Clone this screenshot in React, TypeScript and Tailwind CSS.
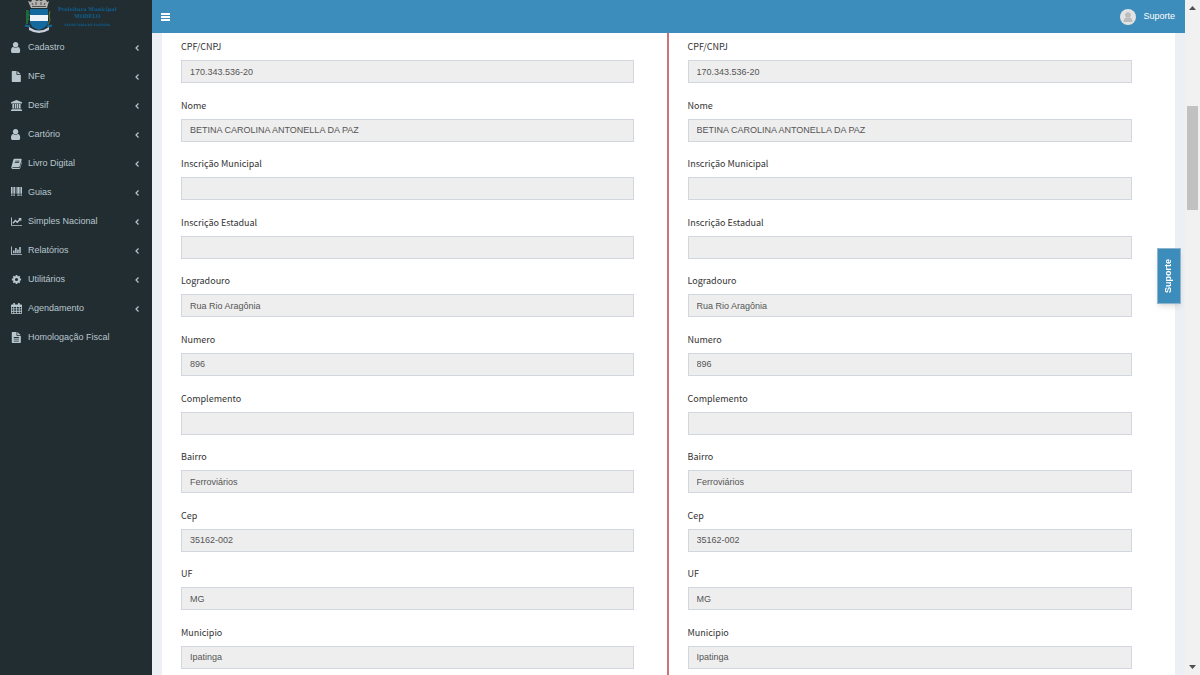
import type { ReactNode } from "react";

type MenuItem = {
    label: string;
    icon: ReactNode;
    hasChildren?: boolean;
};

const iconClass = "h-[11px] w-[11px] shrink-0 fill-current";

function UserIcon() {
    return (
        <svg viewBox="0 128 1536 1536" className={iconClass}>
            <path d="M1280 1399q0 109-62.5 187t-150.5 78h-854q-88 0-150.5-78t-62.5-187q0-85 8.5-160.5t31.5-152 58.5-131 94-89 134.5-34.5q131 128 313 128t313-128q76 0 134.5 34.5t94 89 58.5 131 31.5 152 8.5 160.5zm-256-887q0 159-112.5 271.5t-271.5 112.5-271.5-112.5-112.5-271.5 112.5-271.5 271.5-112.5 271.5 112.5 112.5 271.5z" />
        </svg>
    );
}

function FileIcon() {
    return (
        <svg viewBox="0 0 14 14" className={iconClass}>
            <path d="M1.8 0H7v4.2c0 .5.3.8.8.8h4.7v8.2c0 .5-.3.8-.8.8H1.8c-.5 0-.8-.3-.8-.8V.8c0-.5.3-.8.8-.8zM8 0l4.500 4H8z" />
        </svg>
    );
}

function BankIcon() {
    return (
        <svg viewBox="0 0 14 14" className={iconClass}>
            <path d="M7 0l7 3v1.300H0V3zM1.800 5h2.200v5.500H1.800zM5 5h1.700v5.500H5zM7.500 5h1.700v5.500H7.500zM10 5h2.200v5.500H10zM1 11h12v1H1zM0 12.300h14V14H0z" />
        </svg>
    );
}

function BookIcon() {
    return (
        <svg viewBox="0 0 14 14" className={iconClass}>
            <path
                fillRule="evenodd"
                d="M4.500 1h7.700c1 0 1.600.7 1.300 1.600l-2.400 8c-.3.800-.8 1.200-1.600 1.200H2.400c-.7 0-.8.800 0 1h7.700c.8 0 1.200-.4 1.400-1l2.300-7.300c.3.500.2 1 .1 1.400l-2 6.600c-.3 1-1 1.500-2 1.500H2.500C1 14 0 12.700.5 11.400L3 2.300C3.200 1.500 3.800 1 4.500 1zM5.500 3.500l-.3.900h5.500l.3-.9zM4.900 5.500l-.3.900h5.500l.3-.9z"
            />
        </svg>
    );
}

function BarcodeIcon() {
    return (
        <svg viewBox="0 2 14 14" className={iconClass}>
            <path d="M0 0h2v10.500H0zM3 0h2v10.500H3zM6 0h1v10.500H6zM8 0h3v10.500H8zM12 0h2v10.500h-2zM0 11.500h2V13H0zM3 11.500h2V13H3zM8 11.500h3V13H8zM12 11.500h2V13h-2z" />
        </svg>
    );
}

function LineChartIcon() {
    return (
        <svg viewBox="0 0 16 14" className={iconClass}>
            <path d="M0 1h1.300v11H16v1.300H0z" />
            <path d="M10.500 2H15v4.500l-1.500-1.500L9 9.500 6.500 7 3.500 10.200 2 8.700l4.500-4.500L9 6.700l3-3.200z" />
        </svg>
    );
}

function BarChartIcon() {
    return (
        <svg viewBox="0 0 16 14" className={iconClass}>
            <path d="M0 1h1.300v11H16v1.300H0zM3 7h2.200v4H3zM6 3.500h2.200V11H6zM9 5.500h2.200V11H9zM12 2h2.200v9H12z" />
        </svg>
    );
}

function CogIcon() {
    return (
        <svg viewBox="-1 -1 16 16" className={iconClass}>
            <circle cx="7" cy="7" r="3.700" fill="none" stroke="currentColor" strokeWidth="2.800" />
            <path
                fill="none"
                stroke="currentColor"
                strokeWidth="2.600"
                d="M7 .3v2.500M7 11.200v2.500M.3 7h2.500M11.200 7h2.500M2.300 2.300L4 4M10 10l1.700 1.700M2.300 11.700L4 10M10 4l1.700-1.700"
            />
        </svg>
    );
}

function CalendarIcon() {
    return (
        <svg viewBox="0 0 14 14" className={iconClass}>
            <path
                fillRule="evenodd"
                d="M1 2h2V0h2v2h4V0h2v2h2c.5 0 1 .4 1 1v10c0 .6-.5 1-1 1H1c-.5 0-1-.4-1-1V3c0-.6.5-1 1-1zM1 5v2h2V5zM4 5v2h2.500V5zM7.500 5v2H10V5zM11 5v2h2V5zM1 8v2h2V8zM4 8v2h2.500V8zM7.500 8v2H10V8zM11 8v2h2V8zM1 11v2h2v-2zM4 11v2h2.500v-2zM7.500 11v2H10v-2zM11 11v2h2v-2z"
            />
        </svg>
    );
}

function FileTextIcon() {
    return (
        <svg viewBox="0 0 14 14" className={iconClass}>
            <path
                fillRule="evenodd"
                d="M1.800 0H7v4.200c0 .5.3.8.8.8h4.700v8.200c0 .5-.3.8-.8.8H1.800c-.5 0-.8-.3-.8-.8V.8c0-.5.3-.8.8-.8zM8 0l4.500 4H8zM3.500 6.500v1H10v-1zM3.500 8.700v1H10v-1zM3.500 11v1H10v-1z"
            />
        </svg>
    );
}

const menu: MenuItem[] = [
    { label: "Cadastro", icon: <UserIcon />, hasChildren: true },
    { label: "NFe", icon: <FileIcon />, hasChildren: true },
    { label: "Desif", icon: <BankIcon />, hasChildren: true },
    { label: "Cartório", icon: <UserIcon />, hasChildren: true },
    { label: "Livro Digital", icon: <BookIcon />, hasChildren: true },
    { label: "Guias", icon: <BarcodeIcon />, hasChildren: true },
    { label: "Simples Nacional", icon: <LineChartIcon />, hasChildren: true },
    { label: "Relatórios", icon: <BarChartIcon />, hasChildren: true },
    { label: "Utilitários", icon: <CogIcon />, hasChildren: true },
    { label: "Agendamento", icon: <CalendarIcon />, hasChildren: true },
    { label: "Homologação Fiscal", icon: <FileTextIcon /> },
];

const fields = [
    { name: "cpf", label: "CPF/CNPJ", value: "170.343.536-20" },
    { name: "nome", label: "Nome", value: "BETINA CAROLINA ANTONELLA DA PAZ" },
    { name: "inscricao-municipal", label: "Inscrição Municipal", value: "" },
    { name: "inscricao-estadual", label: "Inscrição Estadual", value: "" },
    { name: "logradouro", label: "Logradouro", value: "Rua Rio Aragônia" },
    { name: "numero", label: "Numero", value: "896" },
    { name: "complemento", label: "Complemento", value: "" },
    { name: "bairro", label: "Bairro", value: "Ferroviários" },
    { name: "cep", label: "Cep", value: "35162-002" },
    { name: "uf", label: "UF", value: "MG" },
    { name: "municipio", label: "Municipio", value: "Ipatinga" },
];

function CityLogo() {
    return (
        <a href="#" className="flex h-[33px] items-start gap-1 pl-6">
            <svg viewBox="0 0 30 34" className="h-[34px] w-[30px] shrink-0">
                {/* Crown */}
                <path d="M4 1l3 1 1-2h3l2 1 2-1 2 1 2-1h3l1 2 2-1-2 7H7z" fill="#b5b1ae" />
                <path d="M8 3l1 2M12 2v3M17 2v3M21 3l-1 2M8 6.500h14" stroke="#4f5050" strokeWidth="1" />
                {/* Side branches */}
                <path d="M3 10v14M5 11l-2 2 2 2-2 2 2 3" stroke="#1f6b3c" strokeWidth="2" fill="none" />
                <path d="M26 11l-1 5 1 4-2 5" stroke="#5d7a35" strokeWidth="1" fill="none" />
                {/* Shield */}
                <path d="M6 9h18v13q0 5-9 8-9-3-9-8z" fill="#146a9e" />
                <path d="M6 15h18v6H6z" fill="#eef3f8" />
                {/* Ribbon */}
                <path d="M1 25.500l5 1M28 25.500l-5 1" stroke="#146a9e" strokeWidth="2" />
                <path d="M5 27q10 7 20 0v3q-10 6-20 0z" fill="#c9cfdc" />
            </svg>
            <span className="flex flex-col items-center pt-[6px] font-['DejaVu_Serif',serif] font-bold text-[#0e5f8d]">
                <span className="text-[5px] leading-[7px] whitespace-nowrap">Prefeitura Municipal</span>
                <span className="text-[5px] leading-[7px]">MODELO</span>
                <span className="mt-1 text-[3px] leading-[3px] whitespace-nowrap">SECRETARIA DE FAZENDA</span>
            </span>
        </a>
    );
}

function Sidebar() {
    return (
        <aside className="w-[152px] shrink-0 bg-[#222d32] text-[#b8c7ce]">
            <CityLogo />
            <nav>
                <ul>
                    {menu.map((item) => (
                        <li key={item.label}>
                            <a href="#" className="flex h-[29px] items-center gap-[6px] pr-3 pl-[11px] text-[9px]">
                                {item.icon}
                                <span className="flex-1 whitespace-nowrap">{item.label}</span>
                                {item.hasChildren && (
                                    <svg viewBox="0 0 6 8" className="h-2 w-[6px]">
                                        <path d="M4.500 1.500L2 4l2.500 2.500" fill="none" stroke="currentColor" strokeWidth="1.200" />
                                    </svg>
                                )}
                            </a>
                        </li>
                    ))}
                </ul>
            </nav>
        </aside>
    );
}

function Header() {
    return (
        <header className="flex h-[33px] shrink-0 items-center justify-between bg-[#3c8dbc] pr-[10px] pl-[9px] text-white">
            <button type="button" aria-label="Menu">
                <svg viewBox="0 0 9 8" className="h-2 w-[9px] fill-current">
                    <path d="M0 0h9v2H0zM0 3h9v2H0zM0 6h9v2H0z" />
                </svg>
            </button>
            <a href="#" className="flex items-center gap-[7px] text-[9px]">
                <svg viewBox="0 0 16 16" className="h-4 w-4">
                    <circle cx="8" cy="8" r="8" fill="#e3e3e3" />
                    <circle cx="8" cy="6" r="2.800" fill="#bcbcbc" />
                    <path d="M3.500 13q0-4 3-4.500h3q3 .5 3 4.500z" fill="#bcbcbc" />
                </svg>
                Suporte
            </a>
        </header>
    );
}

function FieldColumn({ prefix, className }: { prefix: string; className: string }) {
    return (
        <div className={`flex flex-col justify-between gap-3 pt-[7px] pb-[6px] ${className}`}>
            {fields.map((field) => (
                <div key={field.name}>
                    <label
                        htmlFor={`${prefix}-${field.name}`}
                        className="mb-[6px] block font-['Noto_Sans_CJK_JP',sans-serif] text-[9px] leading-[14px] text-[#333]"
                    >
                        {field.label}
                    </label>
                    <input
                        id={`${prefix}-${field.name}`}
                        type="text"
                        readOnly
                        defaultValue={field.value}
                        className="block h-[23px] w-full border border-[#d2d6de] bg-[#eee] px-2 text-[9px] text-[#555]"
                    />
                </div>
            ))}
        </div>
    );
}

function Scrollbar() {
    return (
        <div className="flex w-[15px] shrink-0 flex-col items-center bg-[#f1f1f1] py-[6px]">
            <svg viewBox="0 0 7 4" className="h-1 w-[7px] fill-[#505050]">
                <path d="M0 4l3.500-4L7 4z" />
            </svg>
            <div className="flex w-full flex-1 flex-col items-center">
                <div className="basis-[14.6%]" />
                <div className="w-[11px] basis-[16%] bg-[#c1c1c1]" />
            </div>
            <svg viewBox="0 0 7 4" className="h-1 w-[7px] fill-[#505050]">
                <path d="M0 0l3.500 4L7 0z" />
            </svg>
        </div>
    );
}

export default function App() {
    return (
        <div className="flex min-h-screen bg-[#ecf0f5] font-['Liberation_Sans',Arial,sans-serif]">
            <Sidebar />

            <div className="flex min-w-0 flex-1 flex-col">
                <Header />
                <main className="flex flex-1 flex-col px-[10px]">
                    <form className="grid flex-1 grid-cols-2 bg-white">
                        <FieldColumn prefix="atual" className="border-r-2 border-[#c9757a] pr-[33px] pl-[19px]" />
                        <FieldColumn prefix="novo" className="pr-[43px] pl-[19px]" />
                    </form>
                </main>
            </div>

            <Scrollbar />

            {/* Support tab */}
            <button
                type="button"
                className="fixed top-[248px] right-[19px] flex h-[56px] w-6 items-center justify-center border border-[#8fb4cb] bg-[#3c8dbc] text-[9px] font-bold text-white shadow-md"
            >
                <span className="rotate-180 [writing-mode:vertical-rl]">Suporte</span>
            </button>
        </div>
    );
}
